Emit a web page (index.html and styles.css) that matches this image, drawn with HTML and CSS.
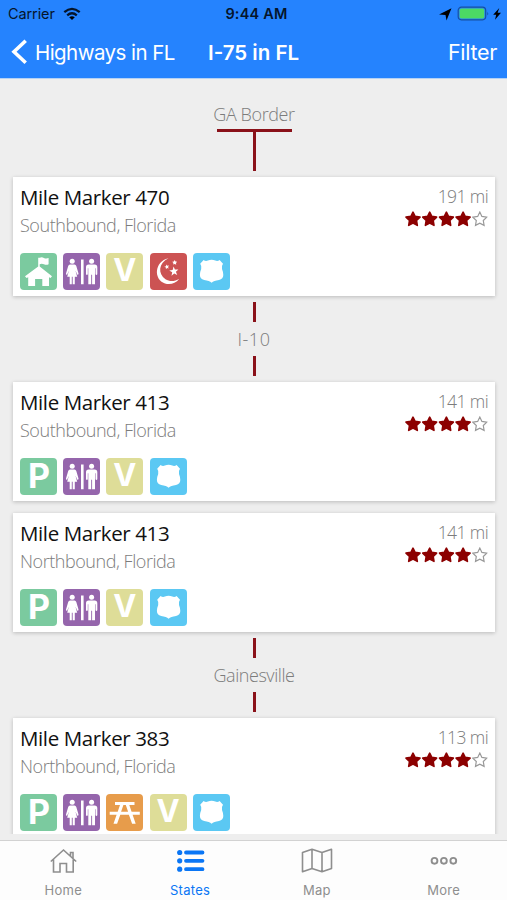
FILE: index.html
```html
<!DOCTYPE html>
<html lang="en">
<head>
    <meta charset="UTF-8">
    <meta name="viewport" content="width=device-width, initial-scale=1.0">
    <title>I-75 in FL</title>
    <link rel="stylesheet" href="styles.css">
</head>
<body>
    <!-- shared icons -->
    <svg class="sprite">
        <symbol id="welcome" viewBox="0 0 37 37">
            <path fill="#fff" d="M18.2 13.500V4.800h1.500q2-.9 4.200.1t4.700.1v6.200q-2.300 1-4.600 0t-4.300 0v2.300L32 23.300l-1.400 1.700-1.600-.8V33h-6.700v-7h-7.200v7H8.200v-8.800l-1.700.8L5 23.300Z"/>
        </symbol>
        <symbol id="restroom" viewBox="0 0 37 37">
            <g fill="#fff">
                <circle cx="9.200" cy="8.200" r="2.500"/>
                <path d="M7 11.500h4.500q1.300 0 1.800 1.600l2.200 7.500q0 1.400-1.100 1.200L12.400 17.500l1.800 6.300h-2.400v7.500H9.700v-7.500h-.9v7.500H6.700v-7.500H4.200L6 17.500l-1.900 4.300Q2.800 22 3 20.600l2.200-7.500q.5-1.600 1.800-1.600Z"/>
                <path d="M18 6.500h2.600v24.800H18Z"/>
                <circle cx="28.600" cy="8.200" r="2.500"/>
                <path d="M25.600 11.500h6q2.700 0 2.700 2.800v7q-.9 1.300-1.800 0v-6h-.5v16h-2.900v-9.500h-.9v9.500h-2.900v-16h-.5v6q-.9 1.300-1.800 0v-7q0-2.800 2.600-2.800Z"/>
            </g>
        </symbol>
        <symbol id="night" viewBox="0 0 37 37">
            <path fill="#fff" d="M18.500 5.300C8.500 10 7.500 21 15.500 26.200c4.300 2.700 9.300 2.200 13.800-.5C25.500 30.700 20 32 15 30.500 3.500 26.800 4 8.500 18.500 5.300Z"/>
            <path fill="#fff" d="m23.600 13.500 1.300 3.100 3.500-.2-2.500 2.400 1.300 3.300-3-1.700-2.700 2.300.7-3.500-3-1.700 3.400-.4ZM16.400 11.400l1 1.400 1.700-.2-1.100 1.400.8 1.600-1.700-.5-1.200 1.200v-1.700l-1.600-.8 1.700-.5ZM24.700 7l.8 1.500 1.700.3-1.200 1.200.2 1.700-1.500-.8-1.500.7.200-1.700-1.200-1.200 1.700-.2Z"/>
        </symbol>
        <symbol id="police" viewBox="0 0 37 37">
            <path fill="#fff" d="M10.600 7q2 1.600 4.300.6 3.700-1.600 7.400 0 2.300 1 4.300-.6l3.400 3.700q-1.800 2.500-1 5.300 1.300 3 1.300 6 0 4-4.300 5-5.200.6-7.400 2.800-2.200-2.200-7.400-2.800-4.300-1-4.300-5 0-3 1.300-6 .8-2.800-1-5.300Z"/>
        </symbol>
        <symbol id="picnic" viewBox="0 0 37 37">
            <path fill="#fff" d="M9 8h19.500v3h-5.200l2.300 6.800h8.200v3h-7.200l3.100 8.900h-3.600l-3.200-8.900h-8.600l-3.200 8.900H7.500l3.100-8.900H3.700v-3h8L14 11H9Zm8.400 3-2.300 6.800h7L19.800 11Z"/>
        </symbol>
        <symbol id="star" viewBox="0 0 16 16">
            <path d="m8 1.100 2.100 4.300 4.900.7-3.500 3.400.8 4.900L8 12.100l-4.300 2.300.8-4.900L1 6.100l4.900-.7Z"/>
        </symbol>
        <symbol id="rating" viewBox="0 0 84 16">
            <g fill="#8c0000" stroke="#8c0000" stroke-width="1.600" stroke-linejoin="round">
                <use href="#star" width="16" height="16"/>
                <use href="#star" x="16.700" width="16" height="16"/>
                <use href="#star" x="33.400" width="16" height="16"/>
                <use href="#star" x="50.100" width="16" height="16"/>
            </g>
            <use href="#star" x="66.800" width="16" height="16" fill="none" stroke="#999" stroke-width="1.200"/>
        </symbol>
    </svg>

    <header>
        <div class="status">
            <div class="carrier">Carrier
                <svg width="18" height="14" viewBox="0 0 18 14"><g fill="none" stroke="#05152b" stroke-width="2.300"><path d="M1.300 5.100q7.700-6.500 15.400 0M4.200 8.300q4.800-4 9.600 0"/></g><path d="M6.200 10.300q2.800-2.300 5.600 0L9 13Z"/></svg>
            </div>
            <div class="clock">9:44 AM</div>
            <div class="power">
                <svg width="64" height="16" viewBox="0 0 64 16"><path d="M0 8.500 12.500 2.200 7.500 14.500 6.500 9Z"/><rect x="19.200" y="1.200" width="27.500" height="12.600" rx="3.200" fill="none" stroke="#1750a0" stroke-width="1.200"/><rect x="20.600" y="2.500" width="24.700" height="10" rx="1.800" fill="#4cd964"/><path d="M48.300 5.500q1.700 2 0 4Z" fill="#1750a0"/><path d="M60.300 2 54.200 8.800h3l-1.200 5 6-7.100h-3.400Z"/></svg>
            </div>
        </div>
        <nav class="navbar">
            <a class="back"><svg width="18" height="26" viewBox="0 0 18 26"><path d="M15.700 1.800 4 12.800l11.700 11" fill="none" stroke="#fff" stroke-width="3.600"/></svg><span>Highways in FL</span></a>
            <h1>I-75 in FL</h1>
            <a class="filter">Filter</a>
        </nav>
    </header>

    <main>
        <div class="border-stop">
            <p>GA Border</p>
            <div class="bar"></div>
            <div class="stem"></div>
        </div>

        <section class="card">
            <div class="card-top">
                <div><h2>Mile Marker 470</h2><p class="place">Southbound, Florida</p></div>
                <div class="info"><p>191 mi</p><svg class="rating"><use href="#rating"/></svg></div>
            </div>
            <div class="amenities">
                <svg class="icon green"><use href="#welcome"/></svg>
                <svg class="icon purple"><use href="#restroom"/></svg>
                <span class="icon yellow letter-v">V</span>
                <svg class="icon red"><use href="#night"/></svg>
                <svg class="icon blue"><use href="#police"/></svg>
            </div>
        </section>

        <div class="stop"><p class="road">I-10</p></div>

        <section class="card">
            <div class="card-top">
                <div><h2>Mile Marker 413</h2><p class="place">Southbound, Florida</p></div>
                <div class="info"><p>141 mi</p><svg class="rating"><use href="#rating"/></svg></div>
            </div>
            <div class="amenities">
                <span class="icon green letter-p">P</span>
                <svg class="icon purple"><use href="#restroom"/></svg>
                <span class="icon yellow letter-v">V</span>
                <svg class="icon blue"><use href="#police"/></svg>
            </div>
        </section>

        <section class="card next">
            <div class="card-top">
                <div><h2>Mile Marker 413</h2><p class="place">Northbound, Florida</p></div>
                <div class="info"><p>141 mi</p><svg class="rating"><use href="#rating"/></svg></div>
            </div>
            <div class="amenities">
                <span class="icon green letter-p">P</span>
                <svg class="icon purple"><use href="#restroom"/></svg>
                <span class="icon yellow letter-v">V</span>
                <svg class="icon blue"><use href="#police"/></svg>
            </div>
        </section>

        <div class="stop"><p>Gainesville</p></div>

        <section class="card">
            <div class="card-top">
                <div><h2>Mile Marker 383</h2><p class="place">Northbound, Florida</p></div>
                <div class="info"><p>113 mi</p><svg class="rating"><use href="#rating"/></svg></div>
            </div>
            <div class="amenities">
                <span class="icon green letter-p">P</span>
                <svg class="icon purple"><use href="#restroom"/></svg>
                <svg class="icon orange"><use href="#picnic"/></svg>
                <span class="icon yellow letter-v">V</span>
                <svg class="icon blue"><use href="#police"/></svg>
            </div>
        </section>
    </main>

    <footer>
        <a><svg viewBox="0 0 34 28"><path d="M4.800 15.500 17.500 4l12.700 11.500M7.500 13.500V26h6.500v-8.500h6.500V26h6.700V13.500M24.500 10V6.500H27v6" fill="none" stroke="#8e8e8e" stroke-width="1.600"/></svg>Home</a>
        <a class="active"><svg viewBox="0 0 34 28"><g stroke="#0a76f5" stroke-width="3.800" stroke-linecap="round"><path d="M13 6.500H29.500M13 14.800H29.500M13 23.200H29.500"/></g><g fill="#0a76f5"><circle cx="6.700" cy="6.500" r="2.600"/><circle cx="6.700" cy="14.800" r="2.600"/><circle cx="6.700" cy="23.200" r="2.600"/></g></svg>States</a>
        <a><svg viewBox="0 0 34 28"><path d="m2.500 6.500 9.500-3.300L22 6.500l9.500-3.300v19.300L22 25.800l-10-3.300-9.500 3.300ZM12 3.200v19.300M22 6.500v19.300" fill="none" stroke="#8e8e8e" stroke-width="1.600" stroke-linejoin="round"/></svg>Map</a>
        <a><svg viewBox="0 0 34 28"><g fill="none" stroke="#8e8e8e" stroke-width="1.900"><circle cx="7.500" cy="14.800" r="2.900"/><circle cx="16.900" cy="14.800" r="2.900"/><circle cx="26.300" cy="14.800" r="2.900"/></g></svg>More</a>
    </footer>
</body>
</html>
```

FILE: styles.css
```css
* {
    box-sizing: border-box;
}

body {
    font-family: "Open Sans", sans-serif;
    background-color: #eeeeee;
    margin: 0;
    height: 900px;
    display: flex;
    flex-direction: column;
    overflow: hidden;
}

h1, h2, p {
    margin: 0;
}

svg {
    display: block;
    flex-shrink: 0;
}

.sprite {
    display: none;
}

header {
    height: 79px;
    background: #2583fe;
    border-bottom: 1px solid #b5d2f5;
    font-family: Inter, sans-serif;
    color: white;
}

.status {
    display: grid;
    grid-template-columns: 1fr auto 1fr;
    align-items: center;
    height: 27px;
    padding: 0 4px 0 8px;
    color: #05152b;
    font-size: 14.500px;
}

.carrier {
    display: flex;
    align-items: center;
    gap: 8px;
    letter-spacing: -0.1px;
}

.clock {
    font-weight: 600;
    padding-left: 2px;
    letter-spacing: 0.2px;
}

.power {
    justify-self: end;
}

.navbar {
    display: grid;
    grid-template-columns: 1fr auto 1fr;
    align-items: center;
    height: 50px;
    padding: 0 10px;
    font-size: 20.500px;
}

.back {
    display: flex;
    align-items: center;
    gap: 7px;
    white-space: nowrap;
    letter-spacing: -0.55px;
}

h1 {
    font-size: 20.500px;
    font-weight: 600;
}

.filter {
    justify-self: end;
    font-size: 21.500px;
    letter-spacing: -0.3px;
}

main {
    height: 755px;
    overflow: hidden;
    padding: 24px 12px 0 13px;
    color: #7c7c7c;
    font-weight: 300;
}

.border-stop {
    height: 74px;
    display: flex;
    flex-direction: column;
    align-items: center;
    font-size: 18px;
    line-height: 22px;
    letter-spacing: -0.4px;
}

.bar {
    width: 75px;
    height: 3px;
    margin-top: 4px;
    background: #8a1119;
}

.stem {
    width: 3px;
    height: 39px;
    background: #8a1119;
}

.card {
    height: 119px;
    background: white;
    padding: 7px 6px 0 7px;
    box-shadow: 0 1px 4px rgba(0, 0, 0, 0.22);
}

.next {
    margin-top: 12px;
}

.card-top {
    display: flex;
    justify-content: space-between;
    height: 69px;
}

h2 {
    color: #111;
    font-size: 20.500px;
    font-weight: 400;
    line-height: 26px;
    letter-spacing: -0.38px;
    white-space: nowrap;
}

.place {
    font-size: 18px;
    line-height: 31px;
    letter-spacing: -0.45px;
}

.info {
    display: flex;
    flex-direction: column;
    align-items: flex-end;
    font-size: 17.500px;
    line-height: 24px;
    letter-spacing: -0.6px;
}

.info p {
    padding-right: 1px;
}

.rating {
    width: 84px;
    height: 16px;
    margin-top: 3px;
}

.amenities {
    display: flex;
    gap: 6.200px;
}

.icon {
    display: block;
    width: 37px;
    height: 37px;
    border-radius: 4px;
    color: white;
    text-align: center;
    font-family: Inter, sans-serif;
    font-weight: 700;
}

.letter-p {
    font-size: 34px;
    line-height: 36px;
    padding-left: 1px;
}

.letter-v {
    font-size: 31px;
    line-height: 34px;
}

.green {
    background: #7bca9f;
}

.purple {
    background: #9565ac;
}

.yellow {
    background: #dedd98;
}

.red {
    background: #cc5353;
}

.blue {
    background: #5bc8f3;
}

.orange {
    background: #e79c4b;
}

.stop {
    height: 86px;
    padding: 6px 0;
    display: flex;
    flex-direction: column;
    align-items: center;
    justify-content: space-between;
    font-size: 18px;
    line-height: 22px;
    letter-spacing: -0.45px;
}

.road {
    letter-spacing: 0.5px;
}

.stop::before, .stop::after {
    content: "";
    width: 3px;
    height: 20px;
    background: #8a1119;
}

footer {
    margin-top: 6px;
    height: 60px;
    border-top: 1px solid #d2d2d2;
    background: #fdfdfd;
    display: grid;
    grid-template-columns: repeat(4, 1fr);
    font-family: Inter, sans-serif;
    font-size: 13px;
    color: #8e8e8e;
}

footer a {
    display: flex;
    flex-direction: column;
    align-items: center;
    padding-top: 5px;
    gap: 8px;
    line-height: 16px;
    letter-spacing: 0.3px;
}

footer svg {
    width: 34px;
    height: 28px;
}

.active {
    color: #0a76f5;
}
```
